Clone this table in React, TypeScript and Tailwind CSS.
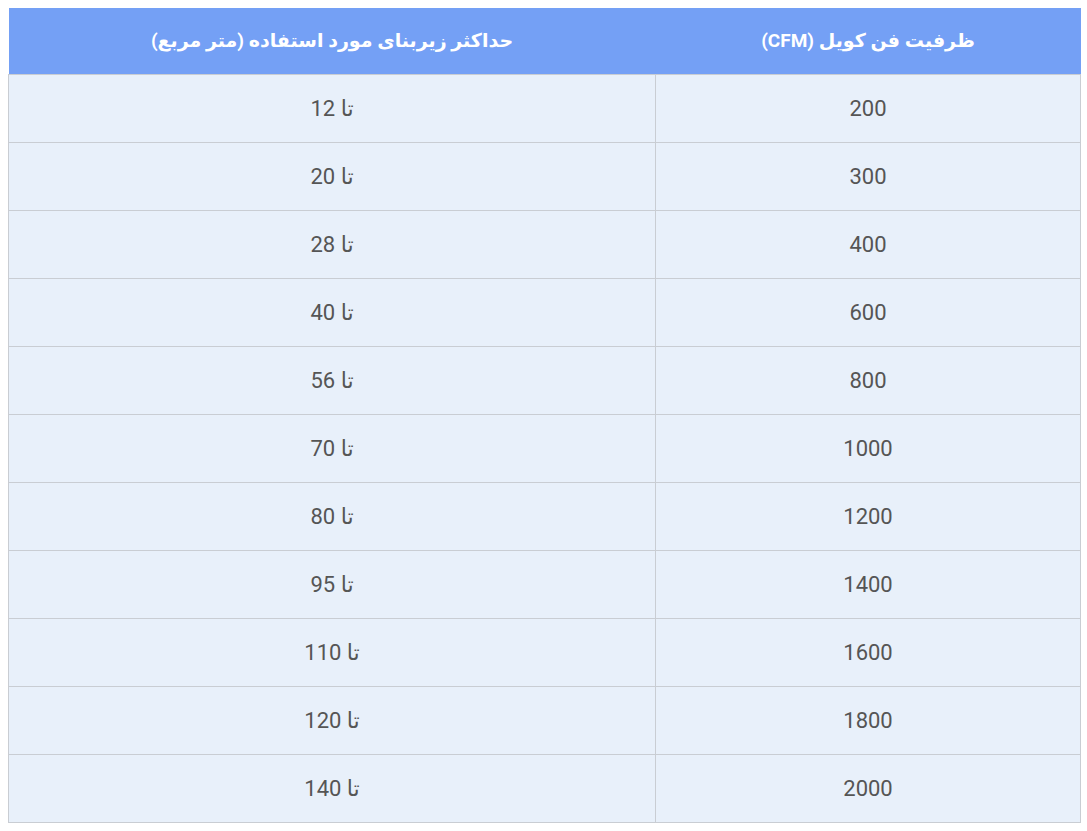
const rows: [string, string][] = [
  ["200", "12"],
  ["300", "20"],
  ["400", "28"],
  ["600", "40"],
  ["800", "56"],
  ["1000", "70"],
  ["1200", "80"],
  ["1400", "95"],
  ["1600", "110"],
  ["1800", "120"],
  ["2000", "140"],
];

export default function App() {
  return (
    <div className="min-h-screen bg-white p-2" style={{ fontFamily: "Roboto, 'DejaVu Sans', sans-serif" }}>
      <table dir="rtl" className="w-[1073px] border-collapse table-fixed">
        <thead>
          <tr className="h-[66px] bg-[#74a0f5] text-white">
            <th className="w-[425px] text-[19px] font-bold">ظرفیت فن کویل (CFM)</th>
            <th className="text-[19px] font-bold">حداکثر زیربنای مورد استفاده (متر مربع)</th>
          </tr>
        </thead>
        <tbody className="bg-[#e8f0fa] text-[#555] text-[22px] font-normal">
          {rows.map(([cfm, area]) => (
            <tr key={cfm} className="h-[68px]">
              <td className="border border-[#c9cdd3] text-center">{cfm}</td>
              <td className="border border-[#c9cdd3] text-center">تا {area}</td>
            </tr>
          ))}
        </tbody>
      </table>
    </div>
  );
}
